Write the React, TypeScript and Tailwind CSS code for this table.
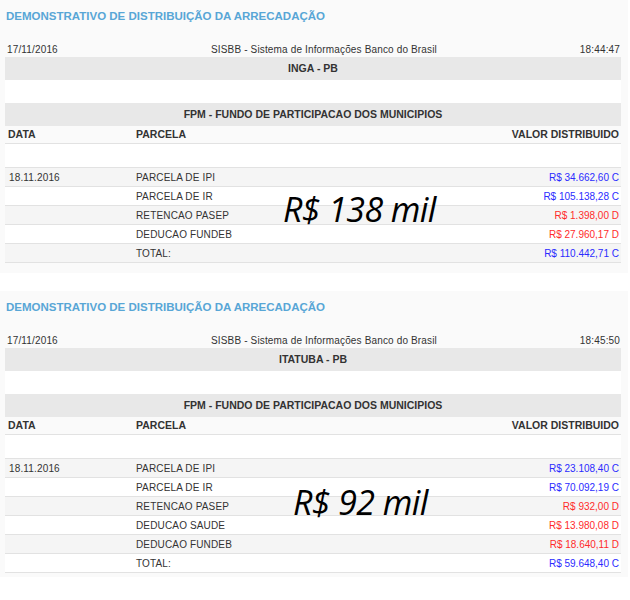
import React from "react";

type Row = { data?: string; parcela: string; valor: string; tipo: "C" | "D" };

const blocks: { cidade: string; hora: string; overlay: string; overlayTop: string; overlayLeft: string; rows: Row[]; pb: string }[] = [
  {
    cidade: "INGA - PB",
    hora: "18:44:47",
    overlay: "R$ 138 mil",
    overlayTop: "top-[192px]",
    overlayLeft: "left-[283px]",
    pb: "pb-[10px]",
    rows: [
      { data: "18.11.2016", parcela: "PARCELA DE IPI", valor: "R$ 34.662,60 C", tipo: "C" },
      { parcela: "PARCELA DE IR", valor: "R$ 105.138,28 C", tipo: "C" },
      { parcela: "RETENCAO PASEP", valor: "R$ 1.398,00 D", tipo: "D" },
      { parcela: "DEDUCAO FUNDEB", valor: "R$ 27.960,17 D", tipo: "D" },
      { parcela: "TOTAL:", valor: "R$ 110.442,71 C", tipo: "C" },
    ],
  },
  {
    cidade: "ITATUBA - PB",
    hora: "18:45:50",
    overlay: "R$ 92 mil",
    overlayTop: "top-[194px]",
    overlayLeft: "left-[293px]",
    pb: "pb-[4px]",
    rows: [
      { data: "18.11.2016", parcela: "PARCELA DE IPI", valor: "R$ 23.108,40 C", tipo: "C" },
      { parcela: "PARCELA DE IR", valor: "R$ 70.092,19 C", tipo: "C" },
      { parcela: "RETENCAO PASEP", valor: "R$ 932,00 D", tipo: "D" },
      { parcela: "DEDUCAO SAUDE", valor: "R$ 13.980,08 D", tipo: "D" },
      { parcela: "DEDUCAO FUNDEB", valor: "R$ 18.640,11 D", tipo: "D" },
      { parcela: "TOTAL:", valor: "R$ 59.648,40 C", tipo: "C" },
    ],
  },
];

function Block({ b }: { b: (typeof blocks)[number] }) {
  return (
    <div className={`relative w-[628px] bg-[#fafafa] pt-[9px] ${b.pb}`}>
      <div className="pl-[6px] text-[11.5px] leading-[14px] font-bold text-[#58a6d6]">
        DEMONSTRATIVO DE DISTRIBUIÇÃO DA ARRECADAÇÃO
      </div>
      <div className="ml-[5px] w-[616px]">
        <div className="mt-[20px] flex h-[14px] items-center text-[10px] leading-[14px] tracking-[0.15px] text-[#333]">
          <span className="w-[172px] pl-[2px]">17/11/2016</span>
          <span className="flex-1 text-center">SISBB - Sistema de Informações Banco do Brasil</span>
          <span className="w-[150px] pr-[1px] text-right">{b.hora}</span>
        </div>
        <div className="flex h-[23px] items-center justify-center bg-[#e8e8e8] text-[10.5px] font-bold text-[#333]">
          {b.cidade}
        </div>
        <div className="h-[23px] bg-white" />
        <div className="flex h-[23px] items-center justify-center bg-[#e8e8e8] text-[10.5px] font-bold text-[#333]">
          FPM - FUNDO DE PARTICIPACAO DOS MUNICIPIOS
        </div>
        <div className="flex h-[18px] items-center border-b border-[#e2e2e2] bg-[#fafafa] text-[10.5px] font-bold text-[#333]">
          <span className="w-[131px] pl-[3px]">DATA</span>
          <span className="flex-1">PARCELA</span>
          <span className="pr-[2px]">VALOR DISTRIBUIDO</span>
        </div>
        <div className="h-[24px] border-b border-[#e2e2e2] bg-white" />
        {b.rows.map((r, i) => (
          <div
            key={i}
            className={`flex h-[19px] items-center border-b border-[#e2e2e2] text-[10px] tracking-[0.15px] text-[#333] ${
              i % 2 === 0 ? "bg-[#f5f5f5]" : "bg-white"
            }`}
          >
            <span className="w-[131px] pl-[4px]">{r.data ?? ""}</span>
            <span className="flex-1">{r.parcela}</span>
            <span
              className={`pr-[2px] text-[10px] tracking-normal ${r.tipo === "C" ? "text-[#2b2bff]" : "text-[#ff2b2b]"}`}
            >
              {r.valor}
            </span>
          </div>
        ))}
      </div>
      <div
        className={`pointer-events-none absolute ${b.overlayTop} ${b.overlayLeft} text-[34px] leading-[34px] tracking-[-0.6px] italic text-black`}
        style={{ fontFamily: '"Open Sans", sans-serif' }}
      >
        {b.overlay}
      </div>
    </div>
  );
}

export default function App() {
  return (
    <div
      className="h-[600px] w-[630px] overflow-hidden bg-white"
      style={{ fontFamily: '"Liberation Sans", Arial, sans-serif' }}
    >
      <Block b={blocks[0]} />
      <div className="h-[18px]" />
      <Block b={blocks[1]} />
    </div>
  );
}
